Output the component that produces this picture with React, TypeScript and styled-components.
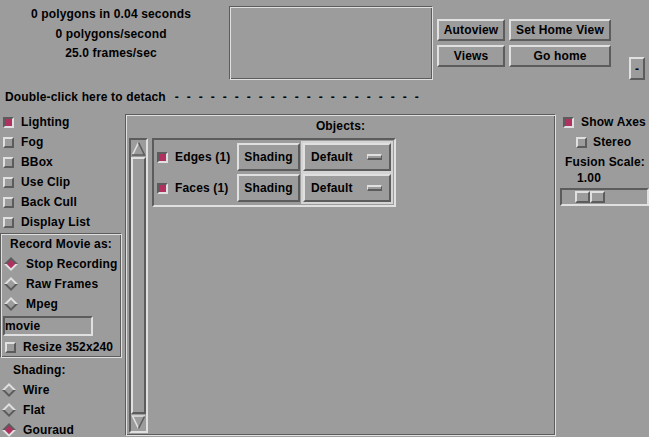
import React from "react";
import styled, { createGlobalStyle, css } from "styled-components";

const BG = "#9c9c9c";
const LT = "#e0e0e0";
const DK = "#5c5c5c";
const SEL = "#b03060";

const GlobalStyle = createGlobalStyle`
  html, body { margin: 0; padding: 0; background: ${BG}; }
  body {
    font-family: "Liberation Sans", Arial, sans-serif;
    font-weight: bold;
    font-size: 12px;
    letter-spacing: 0.15px;
    color: #000;
  }
  * { box-sizing: border-box; }
`;

const raised = css`
  border: 2px solid;
  border-color: ${LT} ${DK} ${DK} ${LT};
`;
const sunken = css`
  border: 2px solid;
  border-color: ${DK} ${LT} ${LT} ${DK};
`;
const etched = css`
  border: 1px solid;
  border-color: ${DK} ${LT} ${LT} ${DK};
  box-shadow: inset 1px 1px 0 ${LT}, inset -1px -1px 0 ${DK};
`;

const Root = styled.div`
  width: 649px;
  height: 437px;
  overflow: hidden;
  display: flex;
  flex-direction: column;
`;

const Top = styled.div`
  display: flex;
  height: 88px;
  flex: none;
`;

const Stats = styled.div`
  width: 222px;
  padding-top: 5px;
  display: flex;
  flex-direction: column;
  align-items: center;
  line-height: 19.5px;
  white-space: nowrap;
`;

const Preview = styled.div`
  margin: 6px 0 0 7px;
  width: 204px;
  height: 74px;
  ${etched}
`;

const ButtonGrid = styled.div`
  margin: 19px 0 0 4px;
  display: grid;
  grid-template-columns: 68px 102px;
  grid-auto-rows: 22px;
  gap: 4px;
  align-self: flex-start;
`;

const PushButton = styled.button`
  ${raised}
  background: ${BG};
  font: inherit;
  letter-spacing: inherit;
  color: #000;
  padding: 0;
  display: flex;
  align-items: center;
  justify-content: center;
  white-space: nowrap;
  cursor: default;
`;

const MinusButton = styled(PushButton)`
  margin: 57px 0 0 18px;
  width: 16px;
  height: 23px;
  align-self: flex-start;
`;

const Detach = styled.div`
  height: 19px;
  line-height: 19px;
  padding-left: 5px;
  display: flex;
  white-space: pre;
  flex: none;
`;

const Dashes = styled.span`
  margin-left: 9px;
  letter-spacing: 8px;
`;

const Main = styled.div`
  display: flex;
  flex: 1;
  min-height: 0;
`;

const LeftCol = styled.div`
  width: 122px;
  flex: none;
  padding-top: 5px;
  display: flex;
  flex-direction: column;
`;

const ToggleRow = styled.div<{ $indent: number; $gap?: number; $h?: number }>`
  display: flex;
  align-items: center;
  height: ${(p) => p.$h ?? 20}px;
  padding-left: ${(p) => p.$indent}px;
  gap: ${(p) => p.$gap ?? 7}px;
  white-space: nowrap;
  flex: none;
`;

const Box = styled.span<{ $on?: boolean }>`
  width: 11px;
  height: 11px;
  flex: none;
  ${(p) => (p.$on ? sunken : raised)}
  background: ${(p) => (p.$on ? SEL : BG)};
`;

const RecordFrame = styled.div`
  margin-top: 1px;
  width: 122px;
  height: 125px;
  flex: none;
  padding: 1px;
  display: flex;
  flex-direction: column;
  ${etched}
`;

const FrameTitle = styled.div`
  height: 19px;
  line-height: 19px;
  text-align: center;
  white-space: nowrap;
`;

const DiamondSvg = styled.svg`
  flex: none;
  display: block;
`;

const Diamond = ({ on }: { on?: boolean }) => (
  <DiamondSvg width="14" height="14" viewBox="0 0 14 14">
    <polygon points="0,7 7,0 14,7" fill={on ? DK : LT} />
    <polygon points="0,7 7,14 14,7" fill={on ? LT : DK} />
    <polygon points="2.8,7 7,2.8 11.2,7 7,11.2" fill={on ? SEL : BG} />
  </DiamondSvg>
);

const TextField = styled.div`
  margin: 2px 0 2px 1px;
  width: 90px;
  height: 20px;
  flex: none;
  ${sunken}
  display: flex;
  align-items: center;
  padding-left: 0;
  line-height: 16px;
`;

const ShadingLabel = styled.div`
  height: 22px;
  padding: 3px 0 0 13px;
  line-height: 18px;
  flex: none;
`;

const ObjectsFrame = styled.div`
  margin: 7px 0 0 3px;
  width: 431px;
  height: 322px;
  flex: none;
  padding: 1px;
  display: flex;
  flex-direction: column;
  ${etched}
`;

const ObjectsTitle = styled.div`
  height: 21px;
  line-height: 21px;
  text-align: center;
  flex: none;
`;

const ObjectsBody = styled.div`
  display: flex;
  align-items: flex-start;
  gap: 4px;
  padding: 1px 0 0 2px;
`;

const ScrollTrack = styled.div`
  width: 19px;
  height: 295px;
  flex: none;
  ${sunken}
  display: flex;
  flex-direction: column;
`;

const ArrowSvg = styled.svg`
  display: block;
  flex: none;
`;

const UpArrow = () => (
  <ArrowSvg width="15" height="17" viewBox="0 0 15 17">
    <polygon points="7.5,2 14,15 1,15" fill={BG} />
    <polyline points="1.5,15 7.5,2.5" stroke={LT} strokeWidth="1.6" fill="none" />
    <polyline points="7.5,2.5 13.5,15 1,15" stroke={DK} strokeWidth="1.6" fill="none" />
  </ArrowSvg>
);

const DownArrow = () => (
  <ArrowSvg width="15" height="17" viewBox="0 0 15 17">
    <polygon points="1,2 14,2 7.5,15" fill={BG} />
    <polyline points="7.5,14.5 1.5,2 14,2" stroke={LT} strokeWidth="1.6" fill="none" />
    <polyline points="13.5,2.5 7.5,14.5" stroke={DK} strokeWidth="1.6" fill="none" />
  </ArrowSvg>
);

const Thumb = styled.div`
  flex: 1;
  ${raised}
`;

const ListPanel = styled.div`
  width: 244px;
  height: 69px;
  flex: none;
  ${sunken}
  padding: 2px 3px;
  display: flex;
  flex-direction: column;
  gap: 1px;
`;

const ObjRow = styled.div`
  height: 30px;
  display: flex;
  align-items: center;
  flex: none;
`;

const ObjLabel = styled.span`
  width: 62px;
  margin-left: 7px;
  white-space: nowrap;
`;

const ShadingButton = styled(PushButton)`
  width: 63px;
  height: 28px;
`;

const OptionButton = styled.div`
  margin-left: 3px;
  width: 88px;
  height: 28px;
  ${raised}
  box-shadow: 0 0 0 2px #d4d4d4;
  display: flex;
  align-items: center;
  justify-content: space-between;
  padding: 0 7px 0 6px;
`;

const CascadeBar = styled.span`
  width: 15px;
  height: 6px;
  border-style: solid;
  border-width: 2px 1px;
  border-color: ${LT} ${DK} ${DK} ${LT};
`;

const RightCol = styled.div`
  flex: 1;
  padding-top: 5px;
  display: flex;
  flex-direction: column;
`;

const FusionLabel = styled.div`
  margin-top: 2px;
  line-height: 16px;
  padding-left: 9px;
  white-space: nowrap;
`;

const FusionValue = styled.div`
  line-height: 16px;
  padding-left: 21px;
`;

const Slider = styled.div`
  margin: 2px 0 0 4px;
  width: 89px;
  height: 18px;
  ${sunken}
  padding: 1px 0 0 13px;
  display: flex;
  align-items: flex-start;
`;

const SliderHalf = styled.span`
  width: 15px;
  height: 12px;
  ${raised}
`;

const toggles = [
  { label: "Lighting", on: true },
  { label: "Fog" },
  { label: "BBox" },
  { label: "Use Clip" },
  { label: "Back Cull" },
  { label: "Display List" },
];

const recordModes = [
  { label: "Stop Recording", on: true },
  { label: "Raw Frames" },
  { label: "Mpeg" },
];

const shadingModes = [
  { label: "Wire" },
  { label: "Flat" },
  { label: "Gouraud", on: true },
];

const objects = ["Edges (1)", "Faces (1)"];

export default function App() {
  return (
    <Root>
      <GlobalStyle />
      <Top>
        <Stats>
          <div>0 polygons in 0.04 seconds</div>
          <div>0 polygons/second</div>
          <div>25.0 frames/sec</div>
        </Stats>
        <Preview />
        <ButtonGrid>
          <PushButton>Autoview</PushButton>
          <PushButton>Set Home View</PushButton>
          <PushButton>Views</PushButton>
          <PushButton>Go home</PushButton>
        </ButtonGrid>
        <MinusButton>-</MinusButton>
      </Top>
      <Detach>
        <span>Double-click here to detach</span>
        <Dashes>---------------------</Dashes>
      </Detach>
      <Main>
        <LeftCol>
          {toggles.map((t) => (
            <ToggleRow key={t.label} $indent={3}>
              <Box $on={t.on} />
              <span>{t.label}</span>
            </ToggleRow>
          ))}
          <RecordFrame>
            <FrameTitle>Record Movie as:</FrameTitle>
            {recordModes.map((m) => (
              <ToggleRow key={m.label} $indent={2} $gap={8}>
                <Diamond on={m.on} />
                <span>{m.label}</span>
              </ToggleRow>
            ))}
            <TextField>movie</TextField>
            <ToggleRow $indent={3} $h={18}>
              <Box />
              <span>Resize 352x240</span>
            </ToggleRow>
          </RecordFrame>
          <ShadingLabel>Shading:</ShadingLabel>
          {shadingModes.map((m) => (
            <ToggleRow key={m.label} $indent={2}>
              <Diamond on={m.on} />
              <span>{m.label}</span>
            </ToggleRow>
          ))}
        </LeftCol>
        <ObjectsFrame>
          <ObjectsTitle>Objects:</ObjectsTitle>
          <ObjectsBody>
            <ScrollTrack>
              <UpArrow />
              <Thumb />
              <DownArrow />
            </ScrollTrack>
            <ListPanel>
              {objects.map((o) => (
                <ObjRow key={o}>
                  <Box $on />
                  <ObjLabel>{o}</ObjLabel>
                  <ShadingButton>Shading</ShadingButton>
                  <OptionButton>
                    <span>Default</span>
                    <CascadeBar />
                  </OptionButton>
                </ObjRow>
              ))}
            </ListPanel>
          </ObjectsBody>
        </ObjectsFrame>
        <RightCol>
          <ToggleRow $indent={7}>
            <Box $on />
            <span>Show Axes</span>
          </ToggleRow>
          <ToggleRow $indent={20} $gap={6}>
            <Box />
            <span>Stereo</span>
          </ToggleRow>
          <FusionLabel>Fusion Scale:</FusionLabel>
          <FusionValue>1.00</FusionValue>
          <Slider>
            <SliderHalf />
            <SliderHalf />
          </Slider>
        </RightCol>
      </Main>
    </Root>
  );
}
